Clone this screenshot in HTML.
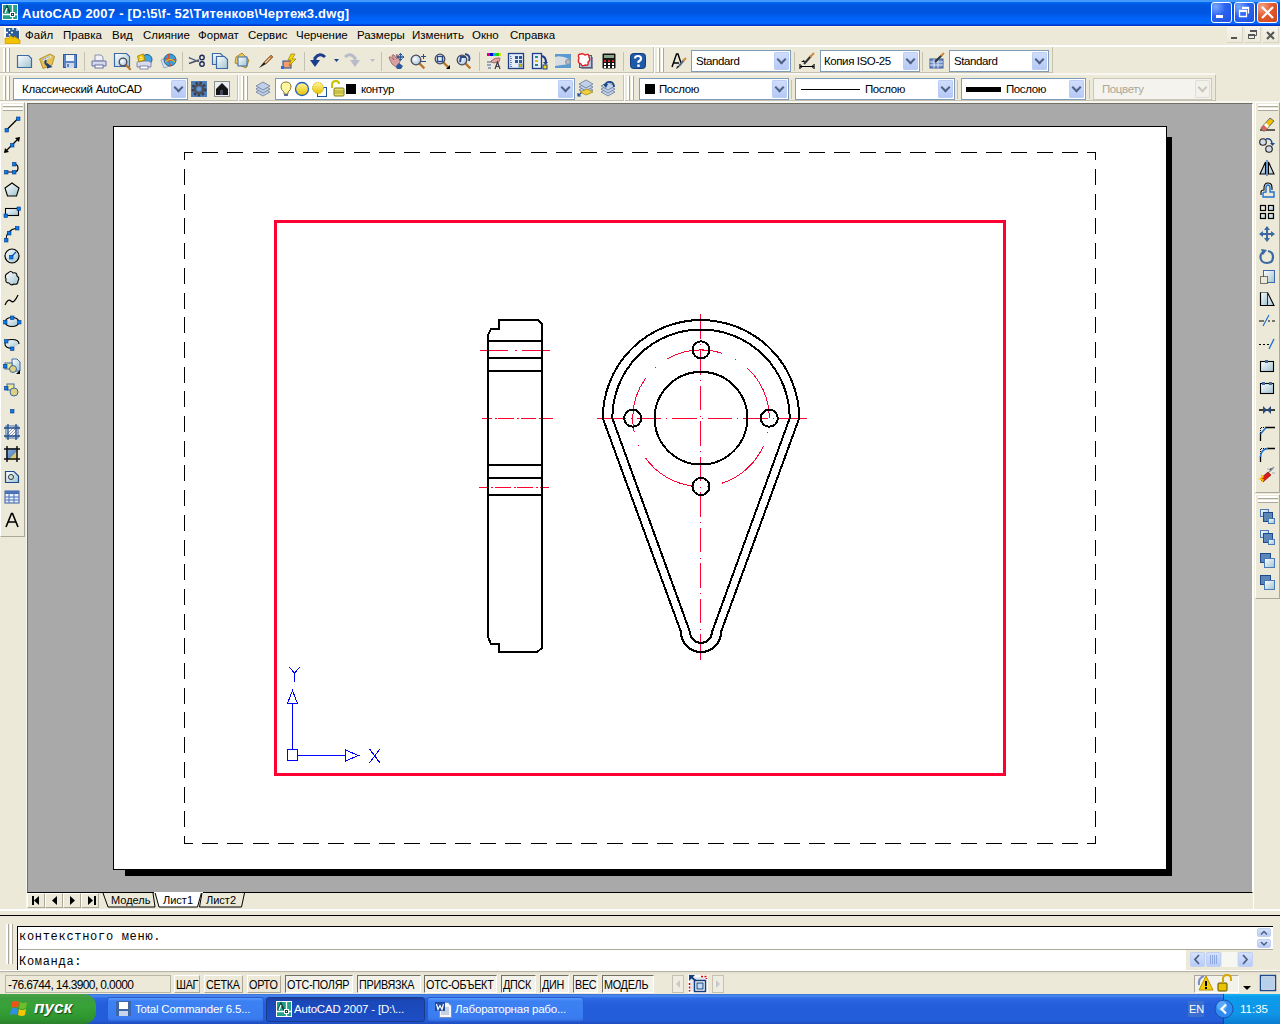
<!DOCTYPE html>
<html><head><meta charset="utf-8"><title>AutoCAD</title>
<style>
*{margin:0;padding:0;box-sizing:border-box}
html,body{width:1280px;height:1024px;overflow:hidden;background:#ECE9D8;font-family:"Liberation Sans",sans-serif;font-size:11px;color:#000}
.a{position:absolute}
.t{position:absolute;white-space:nowrap;line-height:1}
.cb{position:absolute;background:#fff;border:1px solid #7F9DB9}
.dd{position:absolute;top:1px;right:1px;width:15px;bottom:1px;background:linear-gradient(#D2DEFB,#B4C8F6);border-radius:2px;box-shadow:inset 0 0 0 1px #BCCDF5}
.dd:after{content:"";position:absolute;left:3.5px;top:4px;width:5px;height:5px;border-right:2.5px solid #4D6185;border-bottom:2.5px solid #4D6185;transform:rotate(45deg)}
.dis .dd{background:#F2F1EA;box-shadow:inset 0 0 0 1px #E0DED3}
.dis .dd:after{border-color:#C9C7BA}
.sb{position:absolute;white-space:nowrap;overflow:visible;top:975px;height:18px;border:1px solid;border-color:#fff #ACA899 #ACA899 #fff;font-size:12px;line-height:18px;padding-left:1px;letter-spacing:-0.3px}
.sb.on{border-color:#716F64 #fff #fff #716F64;background:#F3F2EA}
</style></head><body>
<div class="a" style="left:0px;top:0px;width:1280px;height:26px;background:linear-gradient(#4499FF 0,#4499FF 2px,#0070FF 2px,#005AE0 4px,#0055E0 8px,#0055E0 13px,#0062F8 18px,#0068FF 23px,#0060F0 24px,#0033CC 25px,#0033CC 26px)"></div>
<div class="t" style="left:22px;top:7px;font-size:13px;color:#fff;font-weight:bold;letter-spacing:0.25px">AutoCAD 2007 - [D:\5\f- 52\Титенков\Чертеж3.dwg]</div>
<div class="a" style="left:1211px;top:2px;width:21px;height:21px;border:1px solid #fff;border-radius:3px;background:radial-gradient(circle at 20% 20%,#7AA8FF,#2A62F0 45%,#1F52E0)"></div>
<div class="a" style="left:1234px;top:2px;width:21px;height:21px;border:1px solid #fff;border-radius:3px;background:radial-gradient(circle at 20% 20%,#7AA8FF,#2A62F0 45%,#1F52E0)"></div>
<div class="a" style="left:1257px;top:2px;width:21px;height:21px;border:1px solid #fff;border-radius:3px;background:radial-gradient(circle at 20% 20%,#F3A48A,#E25B2E 45%,#D0431A)"></div>
<div class="a" style="left:0px;top:26px;width:1280px;height:1px;background:#FFF5DD"></div>
<div class="t" style="left:25px;top:30px;font-size:11.5px;color:#000;">Файл</div>
<div class="t" style="left:63px;top:30px;font-size:11.5px;color:#000;">Правка</div>
<div class="t" style="left:112px;top:30px;font-size:11.5px;color:#000;">Вид</div>
<div class="t" style="left:143px;top:30px;font-size:11.5px;color:#000;">Слияние</div>
<div class="t" style="left:198px;top:30px;font-size:11.5px;color:#000;">Формат</div>
<div class="t" style="left:248px;top:30px;font-size:11.5px;color:#000;">Сервис</div>
<div class="t" style="left:296px;top:30px;font-size:11.5px;color:#000;">Черчение</div>
<div class="t" style="left:357px;top:30px;font-size:11.5px;color:#000;">Размеры</div>
<div class="t" style="left:412px;top:30px;font-size:11.5px;color:#000;">Изменить</div>
<div class="t" style="left:472px;top:30px;font-size:11.5px;color:#000;">Окно</div>
<div class="t" style="left:510px;top:30px;font-size:11.5px;color:#000;">Справка</div>
<div class="a" style="left:1227px;top:27px;width:16px;height:16px;background:linear-gradient(#F5F4EE,#ECE9D8);border-right:1px solid #D8D5C8;border-bottom:1px solid #D8D5C8"></div>
<div class="a" style="left:1245px;top:27px;width:16px;height:16px;background:linear-gradient(#F5F4EE,#ECE9D8);border-right:1px solid #D8D5C8;border-bottom:1px solid #D8D5C8"></div>
<div class="a" style="left:1263px;top:27px;width:16px;height:16px;background:linear-gradient(#F5F4EE,#ECE9D8);border-right:1px solid #D8D5C8;border-bottom:1px solid #D8D5C8"></div>
<div class="a" style="left:0px;top:45px;width:1280px;height:2px;background:#fff"></div>
<div class="a" style="left:0px;top:72px;width:1052px;height:1px;background:#C5C2B2"></div>
<div class="a" style="left:0px;top:73px;width:1215px;height:2px;background:#F7F6F0"></div>
<div class="a" style="left:1052px;top:47px;width:1px;height:26px;background:#C5C2B2"></div>
<div class="a" style="left:653px;top:47px;width:1px;height:26px;background:#C5C2B2"></div>
<div class="a" style="left:654px;top:47px;width:1px;height:26px;background:#fff"></div>
<div class="a" style="left:3px;top:48px;width:2px;height:24px;background:#fff"></div>
<div class="a" style="left:5px;top:48px;width:1px;height:24px;background:#ACA899"></div>
<div class="a" style="left:7px;top:48px;width:2px;height:24px;background:#fff"></div>
<div class="a" style="left:9px;top:48px;width:1px;height:24px;background:#ACA899"></div>
<div class="a" style="left:657px;top:48px;width:2px;height:24px;background:#fff"></div>
<div class="a" style="left:659px;top:48px;width:1px;height:24px;background:#ACA899"></div>
<div class="a" style="left:661px;top:48px;width:2px;height:24px;background:#fff"></div>
<div class="a" style="left:663px;top:48px;width:1px;height:24px;background:#ACA899"></div>
<div class="a" style="left:84px;top:52px;width:1px;height:19px;background:#C5C2B2"></div>
<div class="a" style="left:182px;top:52px;width:1px;height:19px;background:#C5C2B2"></div>
<div class="a" style="left:304px;top:52px;width:1px;height:19px;background:#C5C2B2"></div>
<div class="a" style="left:381px;top:52px;width:1px;height:19px;background:#C5C2B2"></div>
<div class="a" style="left:479px;top:52px;width:1px;height:19px;background:#C5C2B2"></div>
<div class="a" style="left:623px;top:52px;width:1px;height:19px;background:#C5C2B2"></div>
<div class="a" style="left:794px;top:52px;width:1px;height:19px;background:#C5C2B2"></div>
<div class="a" style="left:922px;top:52px;width:1px;height:19px;background:#C5C2B2"></div>
<div class="cb" style="left:691px;top:50px;width:100px;height:22px;border-color:#7F9DB9;background:#fff"><div class="dd"></div></div>
<div class="t" style="left:696px;top:56px;font-size:11.5px;color:#000;letter-spacing:-0.4px">Standard</div>
<div class="cb" style="left:820px;top:50px;width:100px;height:22px;border-color:#7F9DB9;background:#fff"><div class="dd"></div></div>
<div class="t" style="left:824px;top:56px;font-size:11.5px;color:#000;letter-spacing:-0.4px">Копия ISO-25</div>
<div class="cb" style="left:949px;top:50px;width:100px;height:22px;border-color:#7F9DB9;background:#fff"><div class="dd"></div></div>
<div class="t" style="left:954px;top:56px;font-size:11.5px;color:#000;letter-spacing:-0.4px">Standard</div>
<div class="a" style="left:0px;top:100px;width:1215px;height:1px;background:#C5C2B2"></div>
<div class="a" style="left:0px;top:101px;width:1280px;height:2px;background:#F7F6F0"></div>
<div class="a" style="left:3px;top:76px;width:2px;height:24px;background:#fff"></div>
<div class="a" style="left:5px;top:76px;width:1px;height:24px;background:#ACA899"></div>
<div class="a" style="left:7px;top:76px;width:2px;height:24px;background:#fff"></div>
<div class="a" style="left:9px;top:76px;width:1px;height:24px;background:#ACA899"></div>
<div class="a" style="left:241px;top:76px;width:2px;height:24px;background:#fff"></div>
<div class="a" style="left:243px;top:76px;width:1px;height:24px;background:#ACA899"></div>
<div class="a" style="left:245px;top:76px;width:2px;height:24px;background:#fff"></div>
<div class="a" style="left:247px;top:76px;width:1px;height:24px;background:#ACA899"></div>
<div class="a" style="left:627px;top:76px;width:2px;height:24px;background:#fff"></div>
<div class="a" style="left:629px;top:76px;width:1px;height:24px;background:#ACA899"></div>
<div class="a" style="left:631px;top:76px;width:2px;height:24px;background:#fff"></div>
<div class="a" style="left:633px;top:76px;width:1px;height:24px;background:#ACA899"></div>
<div class="a" style="left:237px;top:75px;width:1px;height:26px;background:#C5C2B2"></div>
<div class="a" style="left:238px;top:75px;width:1px;height:26px;background:#fff"></div>
<div class="a" style="left:623px;top:75px;width:1px;height:26px;background:#C5C2B2"></div>
<div class="a" style="left:624px;top:75px;width:1px;height:26px;background:#fff"></div>
<div class="a" style="left:1215px;top:75px;width:1px;height:26px;background:#C5C2B2"></div>
<div class="cb" style="left:13px;top:78px;width:175px;height:22px;border-color:#7F9DB9;background:#fff"><div class="dd"></div></div>
<div class="t" style="left:22px;top:84px;font-size:11.5px;color:#000;letter-spacing:-0.25px">Классический AutoCAD</div>
<div class="cb" style="left:275px;top:78px;width:300px;height:22px;border-color:#7F9DB9;background:#fff"><div class="dd"></div></div>
<div class="t" style="left:361px;top:84px;font-size:11.5px;color:#000;letter-spacing:-0.4px">контур</div>
<div class="cb" style="left:639px;top:78px;width:150px;height:22px;border-color:#7F9DB9;background:#fff"><div class="dd"></div></div>
<div class="t" style="left:659px;top:84px;font-size:11.5px;color:#000;letter-spacing:-0.4px">Послою</div>
<div class="cb" style="left:795px;top:78px;width:160px;height:22px;border-color:#7F9DB9;background:#fff"><div class="dd"></div></div>
<div class="t" style="left:865px;top:84px;font-size:11.5px;color:#000;letter-spacing:-0.4px">Послою</div>
<div class="cb" style="left:961px;top:78px;width:125px;height:22px;border-color:#7F9DB9;background:#fff"><div class="dd"></div></div>
<div class="t" style="left:1006px;top:84px;font-size:11.5px;color:#000;letter-spacing:-0.4px">Послою</div>
<div class="cb dis" style="left:1093px;top:78px;width:119px;height:22px;border-color:#C9C7BA;background:#F4F3EE"><div class="dd"></div></div>
<div class="t" style="left:1102px;top:84px;font-size:11.5px;color:#ACA899;letter-spacing:-0.4px">Поцвету</div>
<div class="a" style="left:957px;top:80px;width:1px;height:19px;background:#C5C2B2"></div>
<div class="a" style="left:1089px;top:80px;width:1px;height:19px;background:#C5C2B2"></div>
<div class="a" style="left:791px;top:80px;width:1px;height:19px;background:#C5C2B2"></div>
<div class="a" style="left:0px;top:102px;width:25px;height:435px;background:#ECE9D8;border-left:1px solid #fff;border-top:1px solid #fff;border-right:1px solid #ACA899;border-bottom:1px solid #ACA899"></div>
<div class="a" style="left:3px;top:104px;width:20px;height:2px;background:#fff"></div>
<div class="a" style="left:3px;top:106px;width:20px;height:1px;background:#ACA899"></div>
<div class="a" style="left:3px;top:108px;width:20px;height:2px;background:#fff"></div>
<div class="a" style="left:3px;top:110px;width:20px;height:1px;background:#ACA899"></div>
<div class="a" style="left:1255px;top:102px;width:25px;height:391px;background:#ECE9D8;border-left:1px solid #fff;border-top:1px solid #fff;border-right:1px solid #ACA899;border-bottom:1px solid #ACA899"></div>
<div class="a" style="left:1258px;top:104px;width:20px;height:2px;background:#fff"></div>
<div class="a" style="left:1258px;top:106px;width:20px;height:1px;background:#ACA899"></div>
<div class="a" style="left:1258px;top:108px;width:20px;height:2px;background:#fff"></div>
<div class="a" style="left:1258px;top:110px;width:20px;height:1px;background:#ACA899"></div>
<div class="a" style="left:1255px;top:494px;width:25px;height:105px;background:#ECE9D8;border-left:1px solid #fff;border-top:1px solid #fff;border-right:1px solid #ACA899;border-bottom:1px solid #ACA899"></div>
<div class="a" style="left:1258px;top:496px;width:20px;height:2px;background:#fff"></div>
<div class="a" style="left:1258px;top:498px;width:20px;height:1px;background:#ACA899"></div>
<div class="a" style="left:1258px;top:500px;width:20px;height:2px;background:#fff"></div>
<div class="a" style="left:1258px;top:502px;width:20px;height:1px;background:#ACA899"></div>
<div class="a" style="left:27px;top:103px;width:1226px;height:790px;background:#A9A9A9;border-left:1px solid #716F64;border-top:1px solid #716F64;border-bottom:1px solid #000;border-right:1px solid #fff"></div>
<div class="a" style="left:113px;top:126px;width:1054px;height:744px;background:#fff;border:1px solid #000"></div>
<div class="a" style="left:27px;top:893px;width:18px;height:15px;border:1px solid;border-color:#fff #ACA899 #ACA899 #fff;background:#ECE9D8"></div>
<div class="a" style="left:45px;top:893px;width:18px;height:15px;border:1px solid;border-color:#fff #ACA899 #ACA899 #fff;background:#ECE9D8"></div>
<div class="a" style="left:63px;top:893px;width:18px;height:15px;border:1px solid;border-color:#fff #ACA899 #ACA899 #fff;background:#ECE9D8"></div>
<div class="a" style="left:81px;top:893px;width:18px;height:15px;border:1px solid;border-color:#fff #ACA899 #ACA899 #fff;background:#ECE9D8"></div>
<div class="a" style="left:0px;top:909px;width:1280px;height:2px;background:#fff"></div>
<div class="a" style="left:0px;top:915px;width:1280px;height:1px;background:#000"></div>
<div class="a" style="left:1253px;top:103px;width:1px;height:806px;background:#fff"></div>
<div class="a" style="left:26px;top:103px;width:1px;height:806px;background:#F8F7F0"></div>
<div class="a" style="left:6px;top:924px;width:2px;height:40px;background:#fff"></div>
<div class="a" style="left:8px;top:924px;width:1px;height:40px;background:#ACA899"></div>
<div class="a" style="left:10px;top:924px;width:2px;height:40px;background:#fff"></div>
<div class="a" style="left:12px;top:924px;width:1px;height:40px;background:#ACA899"></div>
<div class="a" style="left:17px;top:926px;width:1256px;height:44px;background:#fff;border-left:1px solid #000;border-top:1px solid #000"></div>
<div class="a" style="left:18px;top:949px;width:1255px;height:1px;background:#ACA899"></div>
<div class="a" style="left:1186px;top:950px;width:87px;height:20px;background:#ECE9D8"></div>
<div class="t" style="left:19px;top:931px;font-size:12px;color:#000;font-family:'Liberation Mono',monospace;letter-spacing:0.7px">контекстного меню.</div>
<div class="t" style="left:19px;top:956px;font-size:12px;color:#000;font-family:'Liberation Mono',monospace;letter-spacing:0.7px">Команда:</div>
<div class="a" style="left:1257px;top:928px;width:14px;height:9px;background:linear-gradient(#D6E1FB,#B9CCF6);border:1px solid #BFD0F5;border-radius:2px"></div>
<div class="a" style="left:1257px;top:939px;width:14px;height:9px;background:linear-gradient(#D6E1FB,#B9CCF6);border:1px solid #BFD0F5;border-radius:2px"></div>
<div class="a" style="left:1190px;top:952px;width:15px;height:15px;background:linear-gradient(#D6E1FB,#B9CCF6);border:1px solid #BFD0F5;border-radius:2px"></div>
<div class="a" style="left:1206px;top:952px;width:15px;height:15px;background:linear-gradient(#D6E1FB,#B9CCF6);border:1px solid #BFD0F5;border-radius:2px"></div>
<div class="a" style="left:1238px;top:952px;width:15px;height:15px;background:linear-gradient(#D6E1FB,#B9CCF6);border:1px solid #BFD0F5;border-radius:2px"></div>
<div class="a" style="left:1222px;top:952px;width:15px;height:15px;background:#F7F7F2"></div>
<div class="a" style="left:0px;top:970px;width:1280px;height:1px;background:#fff"></div>
<div class="a" style="left:0px;top:971px;width:1280px;height:1px;background:#B5B2A2"></div>
<div class="a" style="left:0px;top:972px;width:1280px;height:3px;background:linear-gradient(#E2DFD0,#ECE9D8)"></div>
<div class="a" style="left:5px;top:975px;width:166px;height:18px;border:1px solid #B9B6A6"></div>
<div class="t" style="left:8px;top:979px;font-size:12px;color:#000;letter-spacing:-0.62px">-76.6744, 14.3900, 0.0000</div>
<div class="sb" style="left:174px;width:26px"><span style="display:inline-block;transform:scaleX(0.9);transform-origin:0 0">ШАГ</span></div>
<div class="sb" style="left:204px;width:39px"><span style="display:inline-block;transform:scaleX(0.9);transform-origin:0 0">СЕТКА</span></div>
<div class="sb" style="left:247px;width:34px"><span style="display:inline-block;transform:scaleX(0.9);transform-origin:0 0">ОРТО</span></div>
<div class="sb on" style="left:285px;width:68px"><span style="display:inline-block;transform:scaleX(0.9);transform-origin:0 0">ОТС-ПОЛЯР</span></div>
<div class="sb on" style="left:357px;width:64px"><span style="display:inline-block;transform:scaleX(0.9);transform-origin:0 0">ПРИВЯЗКА</span></div>
<div class="sb on" style="left:424px;width:73px"><span style="display:inline-block;transform:scaleX(0.9);transform-origin:0 0">ОТС-ОБЪЕКТ</span></div>
<div class="sb on" style="left:501px;width:35px"><span style="display:inline-block;transform:scaleX(0.9);transform-origin:0 0">ДПСК</span></div>
<div class="sb on" style="left:540px;width:29px"><span style="display:inline-block;transform:scaleX(0.9);transform-origin:0 0">ДИН</span></div>
<div class="sb on" style="left:573px;width:25px"><span style="display:inline-block;transform:scaleX(0.9);transform-origin:0 0">ВЕС</span></div>
<div class="sb on" style="left:602px;width:52px"><span style="display:inline-block;transform:scaleX(0.9);transform-origin:0 0">МОДЕЛЬ</span></div>
<div class="a" style="left:672px;top:975px;width:12px;height:18px;border:1px solid #C5C2B2;background:#EFEDE2"></div>
<div class="a" style="left:712px;top:975px;width:12px;height:18px;border:1px solid #C5C2B2;background:#EFEDE2"></div>
<div class="a" style="left:1194px;top:975px;width:45px;height:18px;background:#F3F2EA;border:1px solid;border-color:#ACA899 #fff #fff #ACA899"></div>
<div class="a" style="left:0px;top:994px;width:1280px;height:30px;background:linear-gradient(#3A6FD8 0,#4A8BF0 2px,#2E6BE6 4px,#245EDB 10px,#245DDA 26px,#1E4EC0 30px)"></div>
<div class="a" style="left:0px;top:994px;width:96px;height:30px;border-radius:0 12px 12px 0;background:linear-gradient(#4AA34A 0,#3D9C3D 4px,#37A237 12px,#2F962F 24px,#2C7F2C 30px)"></div>
<div class="t" style="left:34px;top:999px;font-size:17.2px;color:#fff;font-weight:bold;font-style:italic;text-shadow:1px 1px 1px #1A4A1A">пуск</div>
<div class="a" style="left:107px;top:997px;width:157px;height:25px;background:linear-gradient(#5A9BFF,#3C81F3 3px,#3A7CF0 20px,#2F6AE0);border-radius:3px;border:1px solid #2A5ACC"></div>
<div class="t" style="left:135px;top:1004px;font-size:11.5px;color:#fff;letter-spacing:-0.2px">Total Commander 6.5...</div>
<div class="a" style="left:266px;top:997px;width:159px;height:25px;background:linear-gradient(#1E3F9E,#1A48B8 3px,#1E4EC6);border-radius:3px;border:1px solid #1A3A8A"></div>
<div class="t" style="left:294px;top:1004px;font-size:11.5px;color:#fff;letter-spacing:-0.2px">AutoCAD 2007 - [D:\...</div>
<div class="a" style="left:427px;top:997px;width:157px;height:25px;background:linear-gradient(#5A9BFF,#3C81F3 3px,#3A7CF0 20px,#2F6AE0);border-radius:3px;border:1px solid #2A5ACC"></div>
<div class="t" style="left:455px;top:1004px;font-size:11.5px;color:#fff;letter-spacing:-0.2px">Лабораторная рабо...</div>
<div class="a" style="left:1223px;top:994px;width:57px;height:30px;background:linear-gradient(#18B4F8 0,#0C9CEA 3px,#0F95E8 20px,#0B7BD0 30px);border-left:1px solid #1042AF"></div>
<div class="a" style="left:1188px;top:1001px;width:16px;height:16px;background:#3A6ECF"></div>
<div class="t" style="left:1189px;top:1004px;font-size:11px;color:#fff;">EN</div>
<div class="t" style="left:1240px;top:1004px;font-size:11.5px;color:#fff;">11:35</div>
<svg class="a" style="left:0;top:0" width="1280" height="1024" viewBox="0 0 1280 1024">
<g shape-rendering="crispEdges">
<rect x="1167" y="137" width="5" height="739" fill="#000"/>
<rect x="125" y="870" width="1047" height="6" fill="#000"/>
<g stroke="#000" stroke-width="1" fill="none">
<path d="M184 152.5H1096M184 843.5H1096" stroke-dasharray="16 9.29" stroke-dashoffset="7.29"/>
<path d="M184.5 152V844M1095.5 152V844" stroke-dasharray="16 8.7" stroke-dashoffset="7.7"/>
</g>
<rect x="275.5" y="221.5" width="729" height="553" fill="none" stroke="#FF0033" stroke-width="3"/>
<path d="M480 350.5H508M515 350.5H517M522 350.5H550M482 418.5H492M495 418.5H497M498 418.5H514M517 418.5H519M521 418.5H536M539 418.5H541M543 418.5H553M479 487.5H488M491 487.5H493M495 487.5H511M514 487.5H516M517 487.5H533M536 487.5H538M540 487.5H549M597 418.5H626M631 418.5H632M637 418.5H661M666 418.5H667M672 418.5H697M702 418.5H703M708 418.5H732M737 418.5H738M743 418.5H768M773 418.5H774M779 418.5H807M700.5 314V339M700.5 344V345M700.5 350V374.5M700.5 380V381M700.5 385.5V410.0M700.5 415.5V416.5M700.5 421.0V445.5M700.5 451.0V452.0M700.5 456.5V481.0M700.5 486.5V487.5M700.5 492.0V516.5M700.5 522.0V523.0M700.5 527.5V552.0M700.5 557.5V558.5M700.5 563.0V587.5M700.5 593.0V594.0M700.5 598.5V623.0M700.5 628.5V629.5M700.5 634V659.5" stroke="#FF0033" stroke-width="1" fill="none"/>
<circle cx="701" cy="418.2" r="68.3" fill="none" stroke="#FF0033" stroke-width="1" stroke-dasharray="57.2 13.7 1.2 13.72" stroke-dashoffset="57.3"/>
<g stroke="#000" stroke-width="2" fill="none">
<path d="M499 320H538L542 324V648L537 652H499V644H491L488 637V335L491 329H499Z"/>
<path d="M488 341H542M488 358H542M488 371H542M488 465H542M488 478H542M488 495H542"/>
<path d="M602.8 418.2A98.2 98.2 0 0 1 799.2 418.2L721 632A20 20 0 0 1 681 632Z"/>
<path d="M612.3 418.2A88.7 88.7 0 0 1 789.7 418.2L712 632A11 11 0 0 1 690 632Z"/>
<circle cx="701" cy="418.2" r="46.3"/>
<circle cx="701" cy="349.9" r="8.5"/>
<circle cx="701" cy="486.5" r="8.5"/>
<circle cx="632.7" cy="418.2" r="8.5"/>
<circle cx="769.3" cy="418.2" r="8.5"/>
</g>
<g stroke="#0000FF" stroke-width="1" fill="none">
<rect x="287.5" y="749.5" width="10" height="11"/>
<path d="M292.5 749V703.5M287.5 703.5H297.5L292.5 690.5Z M287.5 703.5L292.5 690.5"/>
<path d="M297.5 755.5H345.5M345.5 750V761L358.5 755.5Z"/>
<path d="M289 667L294.5 673L300 667M294.5 673V682"/>
<path d="M369.5 749L380 763M380 749L369.5 763"/>
</g>
</g>
<g transform="translate(2 4)"><rect x="0" y="0" width="16" height="16" fill="#fff"/><rect x="1" y="1" width="14" height="14" fill="#23A08C"/><path d="M10.5 0V16M0 10.5H16" stroke="#fff" stroke-width="1.3"/><path d="M2 9L5 2.5L8 9" stroke="#0C4A40" stroke-width="1.8" fill="none"/><path d="M3 9L5 4" stroke="#E8FFF8" stroke-width="1.5"/><rect x="8.5" y="8.5" width="4" height="4" fill="#0C4A40" stroke="#fff"/><rect x="10" y="10" width="1" height="1" fill="#fff"/></g>
<rect x="1216" y="15" width="7" height="3" fill="#fff"/>
<path d="M1239.5 10.5h7v6h-7zM1242.5 7.5h6v6" stroke="#fff" stroke-width="1.3" fill="none"/><rect x="1239" y="10" width="8" height="2" fill="#fff"/><rect x="1242" y="7" width="7" height="2" fill="#fff"/>
<path d="M1262 7L1273 18M1273 7L1262 18" stroke="#fff" stroke-width="2.2"/>
<g transform="translate(4 27)"><rect x="0" y="0" width="16" height="17" fill="#fff"/><path d="M2 1H12L15 4V13H6V10H2Z" fill="#2F5E96"/><path d="M12 1L15 4H12Z" fill="#B8CCE0"/><path d="M9 1V3M2 5.5H4M7 5.5H9M5.5 2V4M5.5 7V9" stroke="#fff" stroke-width="1.3"/><path d="M1 11V16.5H16V13L10 9.5V11L5.5 8.5V11Z" fill="#F2C400" stroke="#D09A00" stroke-width=".8"/></g>
<rect x="1231" y="37" width="6" height="2" fill="#555"/>
<path d="M1248.5 34.5h6v4h-6zM1250.5 30.5h6v5h-2" stroke="#555" fill="none"/><rect x="1248" y="34" width="7" height="2" fill="#555"/><rect x="1250" y="30" width="7" height="2" fill="#555"/>
<path d="M1267 32L1274 39M1274 32L1267 39" stroke="#555" stroke-width="2"/>
<rect x="645" y="84" width="10" height="10" fill="#000"/>
<rect x="801" y="89" width="59" height="1" fill="#000"/>
<rect x="966" y="87" width="35" height="5" fill="#000"/>
<rect x="346" y="84" width="10" height="10" fill="#000"/>
<rect x="32" y="896" width="2" height="9" fill="#000"/><path d="M39 896V905L34 900.5Z" fill="#000"/>
<path d="M57 896V905L52 900.5Z" fill="#000"/>
<path d="M70 896V905L75 900.5Z" fill="#000"/>
<path d="M88 896V905L93 900.5Z" fill="#000"/><rect x="94" y="896" width="2" height="9" fill="#000"/>
<path d="M103 893L108 907H155L153 893" fill="#ECE9D8" stroke="#000"/>
<path d="M202 893L199.5 907H241.5L244.5 893" fill="#ECE9D8" stroke="#000"/>
<path d="M155 892.5L159 907H197.5L201.5 892.5" fill="#fff" stroke="#000"/>
<rect x="154" y="892" width="49" height="1" fill="#fff"/>
<path d="M1261 934.5L1264 931.5L1267 934.5M1261 942L1264 945L1267 942" stroke="#4D6185" stroke-width="1.5" fill="none"/>
<path d="M1199 955L1195 959.5L1199 964M1243 955L1247 959.5L1243 964" stroke="#4D6185" stroke-width="1.8" fill="none"/>
<path d="M1210.5 955V964M1212.5 955V964M1214.5 955V964M1216.5 955V964" stroke="#8FA8E0" stroke-width="1"/>
<path d="M680 980L676 984L680 988ZM716 980L720 984L716 988Z" fill="#C8C8C8"/>
<rect x="688" y="975" width="20" height="18" fill="#fff"/><rect x="690" y="977" width="16" height="14" fill="#E4E6EC"/><path d="M701 976.5H706.5V979M689.5 983V991.5" stroke="#E00000" stroke-width="1.5" stroke-dasharray="2 1.5" fill="none"/><path d="M696 981L690.5 976.5" stroke="#123F80" stroke-width="1.8"/><path d="M689 975H695L689 981Z" fill="#123F80"/><rect x="694.5" y="980.5" width="11" height="11" fill="#fff" stroke="#123F80" stroke-width="1.5"/><rect x="697" y="983" width="6" height="6" fill="#C6DCF2" stroke="#123F80"/>
<path d="M1243 986H1251L1247 990Z" fill="#000"/>
<rect x="1260.5" y="975.5" width="15" height="15" fill="#fff" stroke="#1D4A8C" stroke-width="1.5"/><rect x="1262" y="977" width="12" height="12" fill="#B9D0EA"/>
<path d="M1199 990L1206 976L1213 990Z" fill="#F5D000" stroke="#B89000"/><rect x="1205" y="981" width="2" height="5" fill="#000"/><rect x="1205" y="987" width="2" height="2" fill="#000"/><path d="M1199 985Q1198 978 1204 976" stroke="#7B8CC8" stroke-width="2" fill="none"/>
<rect x="1218" y="983" width="9" height="8" rx="1" fill="#E8C400" stroke="#5A4A00"/><path d="M1223 983V979Q1223 975 1227 975Q1231 975 1231 979V981" stroke="#D4A800" stroke-width="2" fill="none"/>
<g transform="translate(10 1000)"><path d="M2 2Q5 0 9 2L8 8Q5 6 1 8Z" fill="#F0521A"/><path d="M10 2Q13 4 17 2L16 8Q12 10 9 8Z" fill="#6CBE2A"/><path d="M1 9Q4 7 8 9L7 15Q4 13 0 15Z" fill="#2F8FE8"/><path d="M9 9Q12 11 16 9L15 15Q12 17 8 15Z" fill="#F7C400"/></g>
<g transform="translate(116 1001)"><rect x="0" y="0" width="15" height="15" fill="#3F67A8"/><rect x="3" y="1" width="9" height="7" fill="#fff"/><rect x="3" y="10" width="9" height="5" fill="#C8D4E8"/></g>
<g transform="translate(276 1001)"><rect x="0" y="0" width="16" height="16" fill="#fff"/><rect x="1" y="1" width="14" height="14" fill="#23A08C"/><path d="M10.5 0V16M0 10.5H16" stroke="#fff" stroke-width="1.3"/><path d="M2 9L5 2.5L8 9" stroke="#0C4A40" stroke-width="1.8" fill="none"/><path d="M3 9L5 4" stroke="#E8FFF8" stroke-width="1.5"/><rect x="8.5" y="8.5" width="4" height="4" fill="#0C4A40" stroke="#fff"/><rect x="10" y="10" width="1" height="1" fill="#fff"/></g>
<g transform="translate(435 1000)"><path d="M4.5 2.5H13L16.5 6V17.5H4.5Z" fill="#F4F6FA" stroke="#7A8EB8"/><path d="M6 8H14M6 10H14M6 12H14M6 14H14" stroke="#9AAAC8"/><rect x="0" y="2" width="10" height="9" fill="#1E4A9E"/><path d="M1.5 4L3 9.5L5 5.5L7 9.5L8.5 4" stroke="#fff" stroke-width="1.2" fill="none"/></g>
<circle cx="1224" cy="1009" r="9" fill="#2E8BF0" stroke="#1A50B0"/><circle cx="1222" cy="1006" r="5" fill="#79C0FF" opacity="0.6"/><path d="M1226 1004.5L1221.5 1009L1226 1013.5" stroke="#fff" stroke-width="2.2" fill="none"/>
<defs>
<linearGradient id="gDoc" x1="0" y1="0" x2="1" y2="1"><stop offset="0" stop-color="#fff"/><stop offset="1" stop-color="#9EC3CF"/></linearGradient>
<linearGradient id="gBlue" x1="0" y1="0" x2="1" y2="1"><stop offset="0" stop-color="#8FB3E0"/><stop offset="1" stop-color="#3F6EAE"/></linearGradient>
<linearGradient id="gYel" x1="0" y1="0" x2="0" y2="1"><stop offset="0" stop-color="#FFF59A"/><stop offset="1" stop-color="#E8C200"/></linearGradient>
<radialGradient id="gLens" cx="0.4" cy="0.4" r="0.6"><stop offset="0" stop-color="#fff"/><stop offset="1" stop-color="#A9C6DE"/></radialGradient>
</defs>
<g transform="translate(16 53)"><path d="M1.5 2.5H12.5L15.5 5.5V14.5H1.5Z" fill="url(#gDoc)" stroke="#3C6AA8" stroke-width="1.2"/></g>
<g transform="translate(39 53)"><path d="M0.5 6L11 1L15.5 3.5L13 12L4 15.5Z" fill="#E6C050" stroke="#A88020" stroke-width=".8"/><path d="M3 6.5L11 2.5L12.5 4L5 8Z" fill="#F2F6FA"/><path d="M3 7L11 3.5" stroke="#8AA8D0"/><path d="M7 7Q5 11 9 12.5" stroke="#1B3F7A" stroke-width="2" fill="none"/><path d="M8 10L13.5 14L8 15.5Z" fill="#1B3F7A"/></g>
<g transform="translate(62 53)"><rect x="1.5" y="1.5" width="13" height="13" fill="#5A86C8" stroke="#2F5B9E"/><rect x="4" y="2" width="8" height="6" fill="#F0F4FA"/><rect x="4" y="10" width="8" height="5" fill="#D0D8E8"/><rect x="5" y="11" width="2" height="3" fill="#5A86C8"/></g>
<g transform="translate(91 53)"><path d="M4 2H10L12 4V8H4Z" fill="#F2F2F6" stroke="#8A90B0"/><path d="M1 8H15V13H1Z" fill="#D4D8EC" stroke="#6870A0"/><rect x="4" y="12" width="8" height="3" fill="#fff" stroke="#6870A0"/></g>
<g transform="translate(114 53)"><path d="M0.5 0.5H12.5L15.5 3.5V13.5H0.5Z" fill="url(#gDoc)" stroke="#3C6AA8" stroke-width="1.2"/><path d="M11.66 11.66L16.66 16.66" stroke="#B8742A" stroke-width="2.2"/><circle cx="9" cy="9" r="3.8" fill="url(#gLens)" stroke="#4A4A5A" stroke-width="1.3"/></g>
<g transform="translate(136 53)"><circle cx="11" cy="6.5" r="5" fill="#3FA8E0" stroke="#1D5A8A"/><path d="M1 10Q1 8 4 8H12Q15 8 15 10V14H1Z" fill="#D8DCEE" stroke="#6870A0" stroke-width=".8"/><rect x="4" y="13" width="8" height="3" fill="#fff" stroke="#6870A0" stroke-width=".8"/><path d="M1.5 3L7.5 1L9 7L3 9Z" fill="#F5C800" stroke="#A08000" stroke-width=".8"/><path d="M4 4.5L6 4M4.5 6.5L6.5 6" stroke="#fff"/></g>
<g transform="translate(160 53)"><path d="M1 7L7 4L10 13L4 15Z" fill="#DCE4F0" stroke="#A0A8C0"/><circle cx="10" cy="7" r="6" fill="#3C9FD6" stroke="#235F94"/><path d="M5 5Q10 9 16 6M9 1Q7 7 11 13" stroke="#E64A2A" stroke-width="1.2" fill="none"/><path d="M5 9Q10 4 15 9" stroke="#F2D000" fill="none"/></g>
<g transform="translate(189 53)"><path d="M0 4.5L10 8.5M0 10.5L10 7" stroke="#4A5070" stroke-width="1.6"/><path d="M1 4L8 7" stroke="#E8ECF4" stroke-width=".8"/><circle cx="13" cy="4.5" r="2.2" fill="none" stroke="#1B2A5A" stroke-width="1.4"/><circle cx="13" cy="11" r="2.2" fill="none" stroke="#1B2A5A" stroke-width="1.4"/></g>
<g transform="translate(212 53)"><path d="M0.5 0.5H8.5L11.5 3.5V11.5H0.5Z" fill="url(#gDoc)" stroke="#3C6AA8" stroke-width="1.2"/><path d="M4.5 3.5H12.5L15.5 6.5V15.5H4.5Z" fill="url(#gDoc)" stroke="#3C6AA8" stroke-width="1.2"/></g>
<g transform="translate(234 53)"><path d="M2 4L8 0L15 7L12 15L1 10Z" fill="#E8C85A" stroke="#B08A2C"/><rect x="4" y="4" width="9" height="9" fill="url(#gDoc)" stroke="#3C6AA8"/></g>
<g transform="translate(258 53)"><path d="M1 15L6 9L8 11Z" fill="#1A1A1A"/><path d="M6 9L13 2L15 4L8 11Z" fill="#C87E3A" stroke="#6A4A2A" stroke-width=".6"/><path d="M7 10L12 5" stroke="#DDD"/></g>
<g transform="translate(281 53)"><rect x="2" y="8" width="8" height="7" fill="#F79B6B" stroke="#1F4A9A"/><rect x="0" y="13" width="3" height="3" fill="#1F6EE0"/><path d="M10 1L14 1L11 6H15L8 13L10 7H7Z" fill="#F5D800" stroke="#8A7000" stroke-width=".6"/></g>
<g transform="translate(309 53)"><path d="M16 4Q11 -1 6 5V8" stroke="#1B3F8A" stroke-width="3" fill="none"/><path d="M1 7H11L6 14Z" fill="#1B3F8A"/></g>
<path d="M334 59H339L336.5 62Z" fill="#1B3F8A"/>
<g transform="translate(345 53)"><path d="M0 4Q5 -1 10 5V8" stroke="#B8BCC8" stroke-width="3" fill="none"/><path d="M15 7H5L10 14Z" fill="#B8BCC8"/></g>
<path d="M370 59H375L372.5 62Z" fill="#B8BCC8"/>
<g transform="translate(388 53)"><path d="M1 5Q1 3 3 4L6 7L4 3Q4 1 6 2L9 6L8 2Q9 1 10 2L12 8L11 12L9 15L4 11Z" fill="#D8A0A0" stroke="#8A5A5A" stroke-width=".7"/><path d="M8 13L11 10L15 13L13 16H9Z" fill="#2A5A9A"/><path d="M12.5 0.5V7.5M9 4H16" stroke="#2A5A9A" stroke-width="1.4"/><path d="M11 2L12.5 0.5L14 2M11 6L12.5 7.5L14 6M10.5 2.5L9 4L10.5 5.5M14.5 2.5L16 4L14.5 5.5" stroke="#2A5A9A" fill="none"/></g>
<g transform="translate(410 53)"><path d="M9.36 10.36L14.36 15.36" stroke="#B8742A" stroke-width="2.2"/><circle cx="6" cy="7" r="4.8" fill="url(#gLens)" stroke="#4A4A5A" stroke-width="1.3"/><path d="M11 3.5H16M13.5 1V6M11 8.5H16" stroke="#2A4A8A" stroke-width="1"/></g>
<g transform="translate(434 53)"><path d="M9.36 9.36L14.36 14.36" stroke="#B8742A" stroke-width="2.2"/><circle cx="6" cy="6" r="4.8" fill="url(#gLens)" stroke="#4A4A5A" stroke-width="1.3"/><rect x="3.5" y="3.5" width="5" height="5" fill="none" stroke="#2A4A8A" stroke-width="1.3"/><path d="M12 16H16V12Z" fill="#000"/></g>
<g transform="translate(456 53)"><path d="M9.36 10.36L14.36 15.36" stroke="#B8742A" stroke-width="2.2"/><circle cx="6" cy="7" r="4.8" fill="url(#gLens)" stroke="#4A4A5A" stroke-width="1.3"/><path d="M4 9L5 4H10" stroke="#2A4A8A" stroke-width="2" fill="none"/><path d="M9 1Q15 2 13 8" stroke="#2A4A8A" stroke-width="2" fill="none"/></g>
<g transform="translate(486 53)"><rect x="1" y="0" width="14" height="3" fill="url(#gRain)"/><rect x="1" y="0" width="3" height="3" fill="#E0007A"/><rect x="4" y="0" width="3" height="3" fill="#0000E0"/><rect x="7" y="0" width="3" height="3" fill="#00C0E0"/><rect x="10" y="0" width="3" height="3" fill="#20D000"/><rect x="13" y="0" width="2" height="3" fill="#E0E000"/><path d="M5 8Q9 4 14 5L13 9L7 10Z" fill="#E8A0A0" stroke="#7A5050" stroke-width=".7"/><path d="M1 9H6M1 12H5M2 15H5" stroke="#3A60A0" stroke-width="1.2"/><path d="M9 16L11.5 9L14 16M10 13.5H13" stroke="#3A3A4A" stroke-width="1.2" fill="none"/></g>
<g transform="translate(508 53)"><rect x="0.5" y="0.5" width="15" height="15" fill="#E8EEF8" stroke="#1F3F8A" stroke-width="1.3"/><path d="M3 3V14" stroke="#3A5AA0" stroke-width="1.5" stroke-dasharray="1 1"/><rect x="3" y="3" width="1" height="1" fill="#F0D000"/><rect x="3" y="7" width="1" height="1" fill="#F0D000"/><rect x="3" y="11" width="1" height="1" fill="#F0D000"/><rect x="7" y="3" width="3" height="3" fill="#2A5A9A"/><rect x="11" y="3" width="3" height="3" fill="#2A5A9A"/><rect x="7" y="7" width="3" height="3" fill="#2A5A9A"/><rect x="11" y="7" width="3" height="3" fill="#2A5A9A"/><rect x="11" y="11" width="3" height="3" fill="#E8D000" stroke="#2A5A9A" stroke-width=".6"/></g>
<g transform="translate(532 53)"><rect x="0.5" y="0.5" width="9" height="15" fill="#E8EEF8" stroke="#1F3F8A" stroke-width="1.3"/><rect x="3" y="3" width="3" height="2" fill="#2A8A7A"/><rect x="3" y="7" width="3" height="2" fill="#D8C000"/><rect x="3" y="11" width="3" height="2" fill="#2A8A7A"/><path d="M9 3Q14 3 14 10" stroke="#1F3F8A" stroke-width="2" fill="none"/><path d="M11 9H16L13.5 12Z" fill="#1F3F8A"/><rect x="11" y="12" width="4" height="4" fill="#F0E000" stroke="#1F3F8A"/></g>
<g transform="translate(555 53)"><rect x="0" y="1" width="16" height="14" fill="#5A9AD0"/><path d="M0 4Q6 2 14 6Q16 8 14 11L0 13Z" fill="#D8DDE4"/><circle cx="13" cy="9" r="2.5" fill="#B0B8C4" stroke="#8A929E"/></g>
<g transform="translate(577 53)"><rect x="4" y="4" width="12" height="12" fill="#8A8AA0"/><rect x="2.5" y="2.5" width="12" height="12" fill="#B0C8E0" stroke="#5A5A70"/><path d="M2 5Q0 1 4 1Q6 0 8 2Q12 0 12 4Q14 7 11 9Q12 13 8 12Q5 14 4 11Q0 10 2 5Z" fill="#fff" stroke="#E02020" stroke-width="1.4"/></g>
<g transform="translate(601 53)"><rect x="1.5" y="0.5" width="13" height="15" rx="1" fill="#151515"/><rect x="3" y="2" width="10" height="3" fill="#88A888"/><rect x="3" y="7" width="2" height="2" fill="#E02020"/><rect x="7" y="7" width="2" height="2" fill="#E02020"/><rect x="11" y="7" width="2" height="2" fill="#E02020"/><rect x="3" y="10" width="2" height="2" fill="#fff"/><rect x="7" y="10" width="2" height="2" fill="#fff"/><rect x="11" y="10" width="2" height="2" fill="#fff"/><rect x="3" y="13" width="2" height="2" fill="#fff"/><rect x="7" y="13" width="2" height="2" fill="#fff"/><rect x="11" y="13" width="2" height="2" fill="#fff"/></g>
<g transform="translate(630 53)"><rect x="0.5" y="0.5" width="15" height="15" rx="3" fill="#1F5AA8" stroke="#123A78"/><path d="M5 5.5Q5 3 8 3Q11 3 11 5.5Q11 7.5 8.5 8.5V10" stroke="#fff" stroke-width="2.2" fill="none"/><rect x="7.3" y="11.5" width="2.4" height="2.4" fill="#fff"/></g>
<g transform="translate(671 53)"><path d="M1 14L5.5 1H7L10 10M3 10H8" stroke="#000" stroke-width="1.4" fill="none"/><path d="M8 13L13 7" stroke="#5A6A8A" stroke-width="2"/><path d="M12 8L15 5" stroke="#D08A40" stroke-width="2.2"/><path d="M5 16Q6 12 8 13Q9 14 5 16Z" fill="#222"/></g>
<g transform="translate(799 53)"><path d="M1 11V16M15 11V16M1 13.5H15" stroke="#000" stroke-width="1.2"/><path d="M2 12L4 13.5L2 15ZM14 12L12 13.5L14 15Z" fill="#000"/><path d="M5 11L12 3" stroke="#333" stroke-width="2"/><path d="M11 4L15 0" stroke="#D08A40" stroke-width="2"/><path d="M2 9L5 7L6 9Z" fill="#000"/></g>
<g transform="translate(929 53)"><rect x="1" y="6" width="13" height="9" fill="#6F90C8" stroke="#3A5A9A"/><path d="M1 9H14M1 12H14M5 6V15M9 6V15" stroke="#DDE6F5"/><path d="M6 9L13 2" stroke="#333" stroke-width="2"/><path d="M12 3L15 0" stroke="#D08A40" stroke-width="2"/></g>
<g transform="translate(191 81)"><rect x="0" y="0" width="16" height="16" fill="#4F7DB8"/><circle cx="8" cy="8" r="6" fill="none" stroke="#3A3F48" stroke-width="3" stroke-dasharray="2.4 1.6"/><circle cx="8" cy="8" r="4.2" fill="none" stroke="#4A4F58" stroke-width="2.4"/><circle cx="8" cy="8" r="2" fill="#6A9AD8"/></g>
<g transform="translate(214 81)"><rect x="0.5" y="0.5" width="15" height="15" fill="#E8EEF4" stroke="#333" stroke-dasharray="1 1"/><path d="M2 8L8 2L14 8V14H2Z" fill="#151515"/><rect x="6" y="9" width="3" height="5" fill="#445"/></g>
<g transform="translate(255 81)"><path d="M1 11L8 7L15 11L8 15Z" fill="#C0D0E8" stroke="#6A7A98" stroke-width=".8"/><path d="M1 8L8 4L15 8L8 12Z" fill="#C0D0E8" stroke="#6A7A98" stroke-width=".8"/><path d="M1 5L8 1L15 5L8 9Z" fill="#C0D0E8" stroke="#6A7A98" stroke-width=".8"/></g>
<g transform="translate(278 81)"><path d="M8 1Q13 1 13 6Q13 9 10 11V13H6V11Q3 9 3 6Q3 1 8 1Z" fill="#FFF6A0" stroke="#8A7A30"/><rect x="6" y="13" width="4" height="2" fill="#5A6A9A"/></g>
<g transform="translate(294 81)"><circle cx="8" cy="8" r="6.5" fill="url(#gYel)" stroke="#2060C0" stroke-width="1.3"/></g>
<g transform="translate(311 81)"><rect x="6.5" y="6.5" width="9" height="9" fill="#fff" stroke="#2050A0"/><circle cx="7" cy="7" r="5.5" fill="url(#gYel)" stroke="#C8B000" stroke-dasharray="1.5 1"/></g>
<g transform="translate(329 81)"><path d="M3 7V4Q3 0 7 0Q10 0 10 3" stroke="#C8C000" stroke-width="2" fill="none"/><rect x="5" y="7" width="10" height="8" rx="1" fill="#E8E060" stroke="#7A7A20"/><path d="M5 10H15M5 12H15" stroke="#A8A030"/></g>
<g transform="translate(577 81)"><path d="M2 9L9 5L16 9L9 13Z" fill="#C0D0E8" stroke="#6A7A98" stroke-width=".8"/><path d="M2 6L9 2L16 6L9 10Z" fill="#C0D0E8" stroke="#6A7A98" stroke-width=".8"/><path d="M2 3L9 -1L16 3L9 7Z" fill="#C0D0E8" stroke="#6A7A98" stroke-width=".8"/><path d="M1 15L5 11M1 12V15H4" stroke="#2050A0" stroke-width="1.2" fill="none"/><path d="M3 11L10 8L16 11L9 14Z" fill="#F0D040" stroke="#A08A20" stroke-width=".8"/></g>
<g transform="translate(600 81)"><path d="M1 11L8 7L15 11L8 15Z" fill="#C0D0E8" stroke="#6A7A98" stroke-width=".8"/><path d="M1 8L8 4L15 8L8 12Z" fill="#C0D0E8" stroke="#6A7A98" stroke-width=".8"/><path d="M1 5L8 1L15 5L8 9Z" fill="#C0D0E8" stroke="#6A7A98" stroke-width=".8"/><path d="M5 5Q6 0 11 1Q14 2 14 6" stroke="#1F4A8A" stroke-width="1.8" fill="none"/><path d="M3 3L6 7L8 3Z" fill="#1F4A8A"/></g>
<g transform="translate(4 116)"><path d="M2.5 14L14 2.5" stroke="#000" stroke-width="1.3"/><rect x="1.0" y="12.5" width="3.5" height="3.5" fill="#0A7AE8" stroke="#003A8A" stroke-width=".6"/><rect x="12.5" y="1.0" width="3.5" height="3.5" fill="#0A7AE8" stroke="#003A8A" stroke-width=".6"/></g>
<g transform="translate(4 137)"><path d="M1 15L15 1" stroke="#000" stroke-width="1.3"/><path d="M0 16L1 11L5 15ZM16 0L15 5L11 1Z" fill="#000"/><rect x="6.5" y="6.5" width="3.5" height="3.5" fill="#0A7AE8" stroke="#003A8A" stroke-width=".6"/></g>
<g transform="translate(4 160)"><path d="M2 12H10Q14 12 14 8Q14 4 10 4" stroke="#000" stroke-width="1.2" fill="none"/><rect x="0.5" y="10.5" width="3.5" height="3.5" fill="#0A7AE8" stroke="#003A8A" stroke-width=".6"/><rect x="8.5" y="10.5" width="3.5" height="3.5" fill="#0A7AE8" stroke="#003A8A" stroke-width=".6"/><rect x="8.5" y="2.5" width="3.5" height="3.5" fill="#0A7AE8" stroke="#003A8A" stroke-width=".6"/></g>
<g transform="translate(4 182)"><path d="M8 1L15 6L12.5 14H3.5L1 6Z" fill="url(#gDoc)" stroke="#000" stroke-width="1.1"/></g>
<g transform="translate(4 204)"><rect x="1.5" y="4.5" width="13" height="7" fill="url(#gDoc)" stroke="#000" stroke-width="1.1"/><rect x="0.0" y="10.0" width="3.5" height="3.5" fill="#0A7AE8" stroke="#003A8A" stroke-width=".6"/><rect x="13.0" y="3.0" width="3.5" height="3.5" fill="#0A7AE8" stroke="#003A8A" stroke-width=".6"/></g>
<g transform="translate(4 226)"><path d="M2 14Q2 4 13 2" stroke="#000" stroke-width="1.2" fill="none"/><rect x="0.5" y="12.5" width="3.5" height="3.5" fill="#0A7AE8" stroke="#003A8A" stroke-width=".6"/><rect x="3.5" y="5.5" width="3.5" height="3.5" fill="#0A7AE8" stroke="#003A8A" stroke-width=".6"/><rect x="11.5" y="0.5" width="3.5" height="3.5" fill="#0A7AE8" stroke="#003A8A" stroke-width=".6"/></g>
<g transform="translate(4 248)"><circle cx="8" cy="8" r="7" fill="url(#gDoc)" stroke="#000" stroke-width="1.2"/><path d="M7 9L12 4" stroke="#0050C0" stroke-width="1.2"/><rect x="5.5" y="7.5" width="3.5" height="3.5" fill="#0A7AE8" stroke="#003A8A" stroke-width=".6"/></g>
<g transform="translate(4 270)"><path d="M4 3Q7 0 9 3Q13 2 13 6Q16 8 14 11Q14 15 10 14Q7 16 5 13Q1 13 2 9Q0 5 4 3Z" fill="url(#gDoc)" stroke="#000" stroke-width="1.1"/></g>
<g transform="translate(4 292)"><path d="M1 13Q4 6 7 9Q10 12 14 3" stroke="#000" stroke-width="1.2" fill="none"/></g>
<g transform="translate(4 314)"><ellipse cx="8" cy="8" rx="7" ry="4.5" fill="url(#gDoc)" stroke="#000" stroke-width="1.1"/><rect x="-0.5" y="6.5" width="3.5" height="3.5" fill="#0A7AE8" stroke="#003A8A" stroke-width=".6"/><rect x="13.5" y="6.5" width="3.5" height="3.5" fill="#0A7AE8" stroke="#003A8A" stroke-width=".6"/><rect x="6.5" y="2.0" width="3.5" height="3.5" fill="#0A7AE8" stroke="#003A8A" stroke-width=".6"/></g>
<g transform="translate(4 336)"><path d="M8 12.5Q1 12 1 8Q1 3.5 8 3.5Q15 3.5 15 8" fill="url(#gDoc)" stroke="#000" stroke-width="1.1"/><rect x="0.5" y="3.5" width="3.5" height="3.5" fill="#0A7AE8" stroke="#003A8A" stroke-width=".6"/><rect x="6.5" y="11.0" width="3.5" height="3.5" fill="#0A7AE8" stroke="#003A8A" stroke-width=".6"/></g>
<g transform="translate(4 358)"><path d="M8 1H13L16 4V13H8Z" fill="url(#gDoc)" stroke="#3C6AA8"/><rect x="1" y="5" width="7" height="6" fill="#F0E890" stroke="#3C6AA8"/><circle cx="9" cy="11" r="3.5" fill="#E0D080" stroke="#3C6AA8"/><path d="M12 16H16V12Z" fill="#000"/><rect x="-0.5" y="6.5" width="3.5" height="3.5" fill="#0A7AE8" stroke="#003A8A" stroke-width=".6"/></g>
<g transform="translate(4 382)"><rect x="3" y="2" width="7" height="6" fill="#F0E890" stroke="#3C6AA8"/><circle cx="10" cy="10" r="4" fill="#E0D080" stroke="#3C6AA8"/><rect x="0.5" y="4.5" width="3.5" height="3.5" fill="#0A7AE8" stroke="#003A8A" stroke-width=".6"/></g>
<g transform="translate(4 402)"><rect x="6.5" y="7.5" width="3.5" height="3.5" fill="#0A7AE8" stroke="#003A8A" stroke-width=".6"/></g>
<g transform="translate(4 424)"><rect x="2" y="2" width="12" height="12" fill="#fff" stroke="#3C6AA8"/><path d="M2 14L14 2M5 14L14 5M2 11L11 2M8 14L14 8" stroke="#8A9AB8"/><path d="M0 4H16M0 12H16M4 0V16M12 0V16" stroke="#1F4A8A" stroke-width="1.3"/></g>
<g transform="translate(4 446)"><rect x="2" y="2" width="12" height="12" fill="url(#gBlue)"/><path d="M4 14L14 4V14Z" fill="#D8C870"/><path d="M0 3H16M0 13H16M3 0V16M13 0V16" stroke="#111" stroke-width="1.5"/></g>
<g transform="translate(4 469)"><path d="M1.5 2.5H10L14.5 7V13.5H1.5Z" fill="url(#gDoc)" stroke="#1F4A8A" stroke-width="1.2"/><circle cx="7" cy="8" r="2.5" fill="none" stroke="#333"/></g>
<g transform="translate(4 489)"><rect x="1" y="2" width="14" height="12" fill="#E8F0FA" stroke="#3A5AA0"/><rect x="1" y="2" width="14" height="3" fill="#4A72B8"/><path d="M1 8H15M1 11H15M5 5V14M10 5V14" stroke="#4A72B8"/></g>
<g transform="translate(4 512)"><path d="M2 15L7.5 1.5H8.5L14 15M4.5 10H11.5" stroke="#000" stroke-width="1.6" fill="none"/></g>
<g transform="translate(1259 116)"><path d="M1 14H16" stroke="#000" stroke-width="1.2"/><path d="M4 15L2 12L11 2L15 5L6 15Z" fill="#F3C000" stroke="#3A4A7A" stroke-width=".8"/><path d="M2 12L5 9L8 12L6 15Z" fill="#E06060"/><path d="M5 9L7 7L10 10L8 12Z" fill="#fff"/></g>
<g transform="translate(1259 137)"><circle cx="4" cy="5" r="3.3" fill="#D0DCE8" stroke="#222" stroke-width="1.1"/><circle cx="10" cy="12" r="3.3" fill="#D0DCE8" stroke="#222" stroke-width="1.1"/><path d="M7 2Q13 1 13 7" stroke="#1F4A8A" stroke-width="1.5" fill="none"/><path d="M11 6L13.5 9L16 6Z" fill="#1F4A8A"/></g>
<g transform="translate(1259 160)"><path d="M6.5 2L1 14H6.5Z" fill="url(#gDoc)" stroke="#000" stroke-width="1.1"/><path d="M9.5 2L15 14H9.5Z" fill="url(#gDoc)" stroke="#000" stroke-width="1.1"/><path d="M8 0V16" stroke="#2060C0" stroke-width="1.2"/></g>
<g transform="translate(1259 182)"><path d="M2 13V10Q2 8 5 8V6Q5 1 9 1Q13 1 13 6V8" stroke="#000" stroke-width="1.1" fill="none"/><path d="M4 15V11Q4 10 7 10V6Q7 3 9 3Q11 3 11 6V10H15V15Z" fill="none" stroke="#2070D0" stroke-width="1.4"/></g>
<g transform="translate(1259 204)"><rect x="1.5" y="1.5" width="5" height="5" fill="none" stroke="#000" stroke-width="1.2"/><rect x="9.5" y="1.5" width="5" height="5" fill="url(#gDoc)" stroke="#000" stroke-width="1.2"/><rect x="1.5" y="9.5" width="5" height="5" fill="url(#gDoc)" stroke="#000" stroke-width="1.2"/><rect x="9.5" y="9.5" width="5" height="5" fill="url(#gDoc)" stroke="#000" stroke-width="1.2"/></g>
<g transform="translate(1259 226)"><path d="M8 1V15M1 8H15" stroke="#3A6AA0" stroke-width="2"/><path d="M8 0L5 4H11ZM8 16L5 12H11ZM0 8L4 5V11ZM16 8L12 5V11Z" fill="#3A6AA0"/></g>
<g transform="translate(1259 248)"><path d="M5 3.5Q1 6 1.5 9.5Q2 15 8 15Q14 15 14 9Q14 4 9 3" stroke="#3A6AA0" stroke-width="2.2" fill="none"/><path d="M2 1L8 2L4 7Z" fill="#3A6AA0"/></g>
<g transform="translate(1259 269)"><rect x="4.5" y="1.5" width="11" height="12" fill="url(#gDoc)" stroke="#3C6AA8"/><rect x="1.5" y="7.5" width="7" height="7" fill="#ECE9D8" stroke="#000" stroke-dasharray="1 1"/></g>
<g transform="translate(1259 291)"><path d="M8.5 1.5L15 14.5H8.5Z" fill="url(#gDoc)" stroke="#000" stroke-width="1.1"/><rect x="1.5" y="1.5" width="7" height="13" fill="url(#gDoc)" stroke="#000" stroke-dasharray="1 1"/><path d="M1.5 1.5V14.5H8.5" stroke="#000" stroke-width="1.2" fill="none"/></g>
<g transform="translate(1259 313)"><path d="M0 8H5M9 8H11M13 8H16" stroke="#000" stroke-width="1.2"/><path d="M4 13L10 2" stroke="#2070D0" stroke-width="1.2"/></g>
<g transform="translate(1259 336)"><path d="M0 8.5H2M4 8.5H6M8 8.5H10" stroke="#000" stroke-width="1.2"/><path d="M10 13L15 3" stroke="#2070D0" stroke-width="1.4"/></g>
<g transform="translate(1259 358)"><rect x="1.5" y="3.5" width="13" height="10" fill="url(#gDoc)" stroke="#000" stroke-width="1.1"/><rect x="6" y="2" width="3" height="3" fill="#3A6AA0"/></g>
<g transform="translate(1259 380)"><rect x="1.5" y="3.5" width="13" height="10" fill="url(#gDoc)" stroke="#000" stroke-width="1.1"/><rect x="3" y="2" width="3" height="3" fill="#3A6AA0"/><rect x="10" y="2" width="3" height="3" fill="#3A6AA0"/></g>
<g transform="translate(1259 402)"><path d="M0 8H16" stroke="#000" stroke-width="1.5"/><path d="M4 4L8 8L4 12ZM12 4L8 8L12 12Z" fill="#2A4A7A"/></g>
<g transform="translate(1259 425)"><path d="M1.5 16V8M6 2.5H16" stroke="#000" stroke-width="1.3"/><path d="M1.5 8V2.5H6" stroke="#000" stroke-dasharray="1 1" fill="none"/><path d="M1.5 9L7 2.5" stroke="#2070D0" stroke-width="1.5"/></g>
<g transform="translate(1259 446)"><path d="M1.5 16V10M8 2.5H16" stroke="#000" stroke-width="1.3"/><path d="M1.5 10V2.5H8" stroke="#000" stroke-dasharray="1 1" fill="none"/><path d="M1.5 11Q2 3 9 2.5" stroke="#2070D0" stroke-width="1.6" fill="none"/></g>
<g transform="translate(1259 467)"><path d="M1 12L9 5L12 8L4 15Z" fill="#E01818" stroke="#600" stroke-width=".6"/><path d="M10 2L12 4L14 1M13 6L16 6M9 1V3" stroke="#aaa"/><path d="M2 8L4 10L1 12L4 13L3 15" stroke="#F5C000" stroke-width="1.5" fill="none"/><path d="M10 5L15 0" stroke="#8090B0" stroke-width="1.5"/></g>
<g transform="translate(1259 508)"><rect x="1.5" y="1.5" width="8" height="7" fill="url(#gDoc)" stroke="#4A7AB8"/><rect x="4.5" y="4.5" width="9" height="9" fill="#5A86B8" stroke="#1F4A8A"/><rect x="9.5" y="10.5" width="6" height="5" fill="url(#gDoc)" stroke="#4A7AB8"/></g>
<g transform="translate(1259 529)"><rect x="1.5" y="1.5" width="8" height="7" fill="url(#gDoc)" stroke="#4A7AB8"/><rect x="4.5" y="4.5" width="9" height="9" fill="#5A86B8" stroke="#1F4A8A"/><rect x="9.5" y="10.5" width="6" height="5" fill="url(#gDoc)" stroke="#4A7AB8"/></g>
<g transform="translate(1259 552)"><rect x="1.5" y="1.5" width="10" height="9" fill="#5A86B8" stroke="#1F4A8A"/><rect x="5.5" y="6.5" width="10" height="9" fill="url(#gDoc)" stroke="#4A7AB8"/></g>
<g transform="translate(1259 574)"><rect x="1.5" y="1.5" width="10" height="9" fill="#5A86B8" stroke="#1F4A8A"/><rect x="5.5" y="6.5" width="10" height="9" fill="url(#gDoc)" stroke="#4A7AB8"/></g>
</svg>
<div class="t" style="left:111px;top:895px;font-size:11px;color:#000;">Модель</div>
<div class="t" style="left:163px;top:895px;font-size:11px;color:#000;">Лист1</div>
<div class="t" style="left:206px;top:895px;font-size:11px;color:#000;">Лист2</div>
</body></html>
